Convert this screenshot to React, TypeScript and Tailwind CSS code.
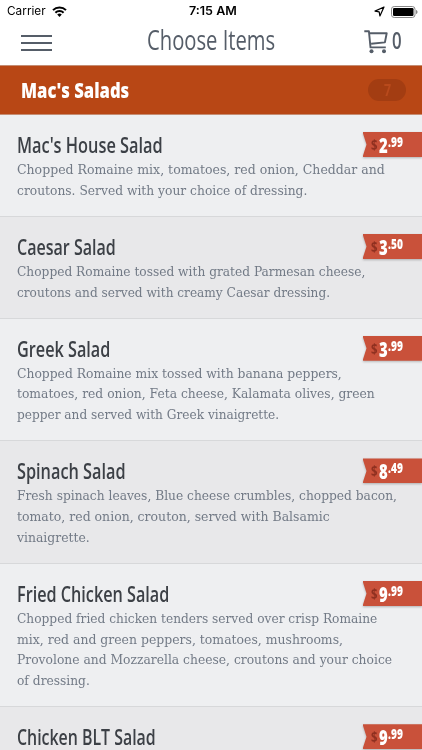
import { useLayoutEffect, useRef, useState } from "react";

interface FitTextProps {
  text: string;
  width: number;
  className?: string;
}

// Single line of text condensed or widened to a fixed width
function FitText({ text, width, className = "" }: FitTextProps) {
  const ref = useRef<HTMLSpanElement>(null);
  const [scale, setScale] = useState(1);

  useLayoutEffect(() => {
    if (ref.current) setScale(width / ref.current.offsetWidth);
  }, [text, width]);

  return (
    <span className="block" style={{ width }}>
      <span
        ref={ref}
        className={`inline-block origin-left whitespace-nowrap align-top ${className}`}
        style={{ transform: `scaleX(${scale})` }}
      >
        {text}
      </span>
    </span>
  );
}

interface MenuItem {
  name: string;
  nameWidth: number;
  dollars: string;
  cents: string;
  lines: [string, number][];
}

const items: MenuItem[] = [
  {
    name: "Mac's House Salad",
    nameWidth: 145.5,
    dollars: "2",
    cents: ".99",
    lines: [
      ["Chopped Romaine mix, tomatoes, red onion, Cheddar and", 367.5],
      ["croutons. Served with your choice of dressing.", 290],
    ],
  },
  {
    name: "Caesar Salad",
    nameWidth: 98.5,
    dollars: "3",
    cents: ".50",
    lines: [
      ["Chopped Romaine tossed with grated Parmesan cheese,", 348.5],
      ["croutons and served with creamy Caesar dressing.", 313],
    ],
  },
  {
    name: "Greek Salad",
    nameWidth: 93.5,
    dollars: "3",
    cents: ".99",
    lines: [
      ["Chopped Romaine mix tossed with banana peppers,", 324.5],
      ["tomatoes, red onion, Feta cheese, Kalamata olives, green", 358],
      ["pepper and served with Greek vinaigrette.", 262.5],
    ],
  },
  {
    name: "Spinach Salad",
    nameWidth: 108.5,
    dollars: "8",
    cents: ".49",
    lines: [
      ["Fresh spinach leaves, Blue cheese crumbles, chopped bacon,", 379.5],
      ["tomato, red onion, crouton, served with Balsamic", 313],
      ["vinaigrette.", 72.5],
    ],
  },
  {
    name: "Fried Chicken Salad",
    nameWidth: 152,
    dollars: "9",
    cents: ".99",
    lines: [
      ["Chopped fried chicken tenders served over crisp Romaine", 360.5],
      ["mix, red and green peppers, tomatoes, mushrooms,", 326.5],
      ["Provolone and Mozzarella cheese, croutons and your choice", 375],
      ["of dressing.", 72.5],
    ],
  },
  {
    name: "Chicken BLT Salad",
    nameWidth: 138.5,
    dollars: "9",
    cents: ".99",
    lines: [],
  },
];

function StatusBar() {
  return (
    <div className="grid h-[22px] shrink-0 grid-cols-3 items-center pl-[7px] pr-1 pt-px font-['Inter',sans-serif] text-[11.5px] text-black">
      <div className="flex items-center gap-[6px]">
        <FitText text="Carrier" width={39} />
        <svg className="h-[11px] w-[15px]" viewBox="0 0 15 11" fill="none" stroke="#000" strokeWidth="2">
          <path d="M1 4.1a9.2 9.2 0 0 1 13 0" />
          <path d="M3.4 6.7a5.8 5.8 0 0 1 8.2 0" />
          <path d="M5.2 8.5a3.3 3.3 0 0 1 4.6 0L7.5 10.9z" fill="#000" stroke="none" />
        </svg>
      </div>
      <div className="flex justify-center font-semibold">
        <FitText text="7:15 AM" width={48} />
      </div>
      <div className="flex items-center justify-end gap-[6px]">
        <svg className="h-[11px] w-[11px]" viewBox="0 0 11 11" fill="none" stroke="#000" strokeWidth="1.2" strokeLinejoin="round">
          <path d="M10 1 1 5.1l4.2.7.7 4.2z" />
        </svg>
        <svg className="h-[12px] w-[27px]" viewBox="0 0 27 12">
          <rect x=".5" y=".5" width="23.5" height="11" rx="2.7" fill="none" stroke="#888" />
          <rect x="2" y="2" width="20.5" height="8" rx="1.2" />
          <path d="M25 4c2 .6 2 3.4 0 4z" fill="#888" />
        </svg>
      </div>
    </div>
  );
}

function NavBar() {
  return (
    <div className="flex h-[43px] shrink-0 items-start justify-between pl-[21px] pr-[21px] text-[#555d68]">
      <button className="mt-[13px] flex flex-col gap-[5px]" aria-label="Menu">
        <span className="h-[2px] w-[31px] bg-[#555d68]" />
        <span className="h-[2px] w-[31px] bg-[#555d68]" />
        <span className="h-[2px] w-[31px] bg-[#555d68]" />
      </button>
      <h1 className="ml-[6px] text-[27px] font-normal leading-[36px]">
        <FitText text="Choose Items" width={128} />
      </h1>
      <div className="flex">
        <svg className="mt-2 h-6 w-6" viewBox="0 0 24 24" fill="none" stroke="#555d68" strokeWidth="1.9" strokeLinejoin="round">
          <path d="M.3 1.2h4.6l1.6 16.2h15.3" />
          <path d="M5.3 3.2h17.4l-1.8 9.2-13.8 1.4" />
          <circle cx="7.5" cy="21.3" r="2" fill="#555d68" stroke="none" />
          <circle cx="20" cy="21.3" r="2" fill="#555d68" stroke="none" />
        </svg>
        <div className="ml-[4px] text-[23px] font-semibold leading-[37px]">
          <FitText text="0" width={9.5} />
        </div>
      </div>
    </div>
  );
}

function PriceTag({ dollars, cents }: { dollars: string; cents: string }) {
  return (
    <div className="mt-[17px] h-[26px] w-[59.5px] drop-shadow-[0_1px_1px_rgba(0,0,0,0.25)]">
      <div className="flex h-[25px] items-start bg-[#c9513a] pl-[8px] text-white [clip-path:polygon(0_0,100%_0,100%_100%,0_100%,4px_50%)]">
        <span className="text-[14px] font-bold leading-[26px] text-[#8f3020]">
          <FitText text="$" width={6.5} />
        </span>
        <span className="ml-[2px] text-[21px] font-extrabold leading-[26px]">
          <FitText text={dollars} width={8.5} />
        </span>
        <span className="text-[14px] font-extrabold leading-[19px]">
          <FitText text={cents} width={14.5} />
        </span>
      </div>
    </div>
  );
}

function MenuRow({ item, shaded }: { item: MenuItem; shaded: boolean }) {
  return (
    <li className={`flex shrink-0 justify-between border-b border-[#d7d8da] pl-[16.5px] ${shaded ? "bg-[#e8e8ea]" : "bg-[#eeeff1]"}`}>
      <div className="w-0 pb-[14.6px] pt-[16px]">
        <h3 className="text-[21px] font-semibold leading-[28px] text-[#3c4046]">
          <FitText text={item.name} width={item.nameWidth} />
        </h3>
        <div className="mt-px font-['DejaVu_Serif','DejaVu_Serif_Condensed',serif] text-[13px] leading-[20.65px] text-[#727a86]">
          {item.lines.map(([line, width]) => (
            <FitText key={line} text={line} width={width} />
          ))}
        </div>
      </div>
      <PriceTag dollars={item.dollars} cents={item.cents} />
    </li>
  );
}

export default function App() {
  return (
    <div className="flex h-[750px] w-[422px] flex-col overflow-hidden bg-white font-['Open_Sans',sans-serif]">
      <StatusBar />
      <NavBar />
      <div className="flex h-[50px] shrink-0 items-center justify-between border-b border-t border-[#c58d73] bg-[#b84715] pl-[21px] pr-[16px]">
        <h2 className="text-[21px] font-extrabold leading-[48px] text-white">
          <FitText text="Mac's Salads" width={108.5} />
        </h2>
        <span className="flex h-[22px] w-[38px] items-center justify-center rounded-full bg-[#a33d12] text-[16px] font-bold text-[#b94a1c]">
          <FitText text="7" width={7} />
        </span>
      </div>
      <ul className="flex flex-col">
        {items.map((item, i) => (
          <MenuRow key={item.name} item={item} shaded={i % 2 === 1} />
        ))}
      </ul>
    </div>
  );
}
